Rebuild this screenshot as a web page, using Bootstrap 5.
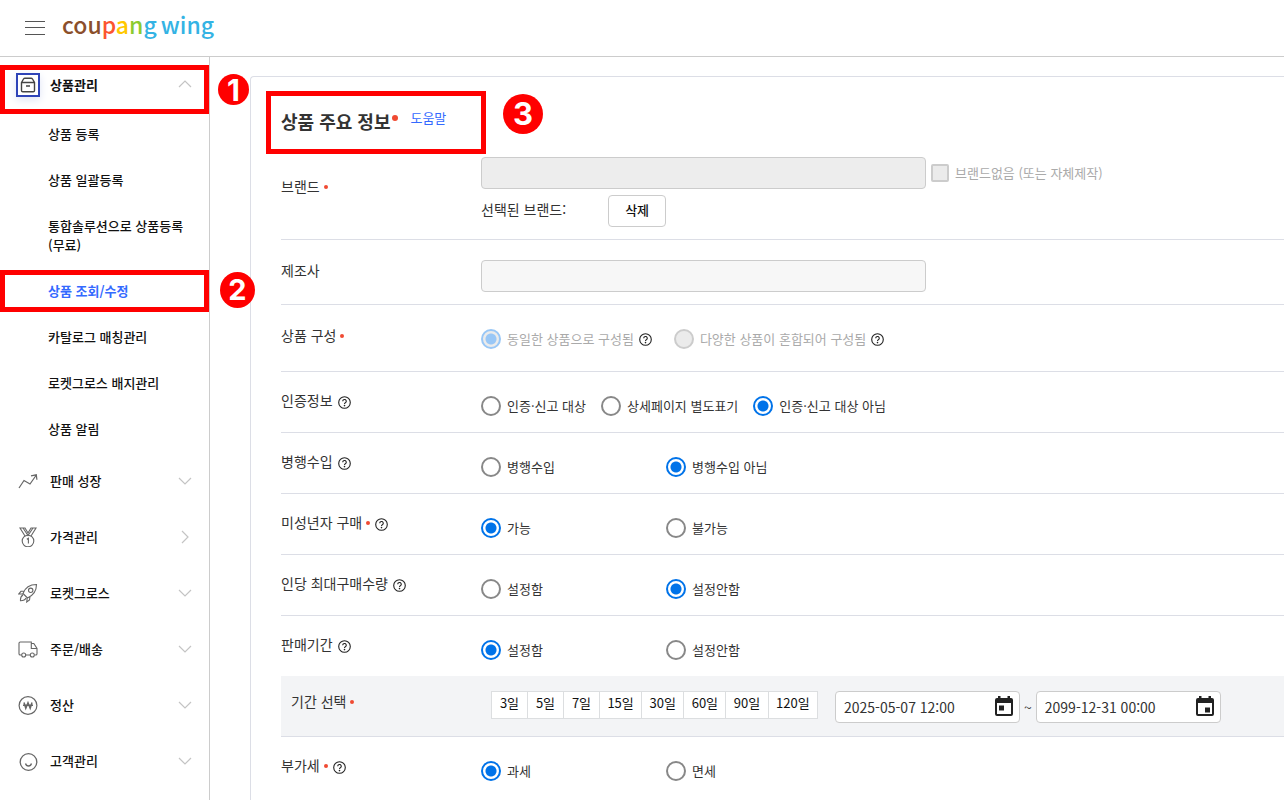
<!DOCTYPE html>
<html lang="ko">
<head>
<meta charset="utf-8">
<meta name="viewport" content="width=device-width, initial-scale=1">
<title>coupang wing</title>
<link href="https://cdn.jsdelivr.net/npm/bootstrap@5.3.0/dist/css/bootstrap.min.css" rel="stylesheet">
<style>
body{font-family:"Noto Sans CJK KR",sans-serif;font-size:14px;line-height:20px;color:#333;background:#fff;overflow-x:hidden}
.topbar{height:57px;border-bottom:1px solid #ccc;padding:0 0 4px 25px}
.brand-logo{font-size:23px;font-weight:500;line-height:32px;margin-left:17px;padding-bottom:4px;color:#34b3e4;display:flex;gap:4px}
.c-brown{color:#8b4f2b}.c-red{color:#fb5530}.c-yellow{color:#ffc800}.c-green{color:#8ccb2e}
.shell{min-height:calc(100vh - 57px)}
.side{width:210px;border-right:1px solid #ccc}
.side a{color:#111;text-decoration:none;font-size:13px;font-weight:500}
.side-top{height:56px;padding:0 17px 0 18px}
.side-top.open{height:55px;font-weight:700!important}
.side-top .glyph{width:20px;height:20px;margin-right:12px;color:#666}
.side-top.open .pic{border:2px solid #2f44b8;width:24px;height:24px;margin:0 10px 0 -2px;box-shadow:0 3px 8px #dfe4f5}
.side-top.open .glyph{margin:0;color:#444}
.side-top .chev{width:14px;height:14px;color:#c4c4c4}
.side-sub a{display:block;padding:12px 16px 15px 48px;line-height:19px}
.side-sub a.current{color:#346aff;font-weight:700}
.frame{position:absolute;border:5px solid #f00;pointer-events:none}
.step{position:absolute;border-radius:50%;background:#f00;color:#fff;font-family:Inter,"Liberation Sans",sans-serif;font-weight:700;display:flex;align-items:center;justify-content:center}
.frame-a{left:0;right:0;top:8px;height:49px}
.frame-b{left:0;right:0;top:1px;height:42px}
.step-a{left:218px;top:17px;width:31px;height:31px;font-size:30px}
.step-b{left:220px;top:3px;width:35px;height:36px;font-size:29px}
.frame-c{left:-15px;top:-1px;width:220px;height:63px}
.step-c{left:222px;top:2px;width:40px;height:40px;font-size:31px}
.main-area{padding:19px 0 0 40px}
.panel{border:1px solid #dcdee6;border-right:0;border-bottom:0;border-top-left-radius:4px;padding:15px 0 0 30px;min-height:100%}
.panel-head{height:65px;padding-top:15px}
.panel-head h1{font-size:18px;line-height:28px;font-weight:700;margin:0}
.panel-head a{font-size:13px;line-height:22px;color:#346aff;text-decoration:none;margin-left:12px}
.req{display:inline-block;width:4px;height:4px;border-radius:50%;background:#f04a32;vertical-align:3px;margin-left:4px}
.panel-head .req{width:6px;height:6px;margin:8px 0 0 2px}
.q{width:13px;height:13px;color:#222;vertical-align:-3px;margin-left:5px}
.frow{border-bottom:1px solid #dcdee6;min-height:61px}
.frow:last-child{border-bottom:0}
.fname{width:200px;flex:none;padding-top:18px}
.fctl{padding-top:24px}
.r-brand{min-height:83px}.r-brand .fname{padding-top:19px}.r-brand .fctl{padding-top:0}
.r-maker{min-height:65px}.r-maker .fname,.r-comp .fname{padding-top:20px}.r-maker .fctl{padding-top:20px}
.r-comp{min-height:67px}
.fctl .wide{width:445px;height:32px;border:1px solid #ccc;border-radius:4px;background:#f7f7f7;min-height:0}
.r-brand .wide{background:#ededed}
.opt{display:flex;align-items:center;font-size:13px}
.opt label{padding-left:6px}
.opt .form-check-input{width:20px;height:20px;margin:0;border:2px solid #888;background:#fff;opacity:1;flex:none}
.opt .form-check-input[type=radio]:checked{border-color:#0073e9;background:radial-gradient(circle,#0073e9 5px,#fff 6px)}
.opt .form-check-input:disabled{border-color:#ccc;background-color:#ebebeb}
.opt .form-check-input[type=radio]:disabled:checked{border-color:#99c7f6;background:radial-gradient(circle,#99c7f6 5px,#ebebeb 6px)}
.opt .form-check-input[type=checkbox]{width:18px;height:18px;border-radius:2px}
.opt .form-check-input:disabled~label{color:#aaa;opacity:1}
.half{width:185px}
.no-brand{margin-left:5px}
.picked{margin-top:6px;gap:42px}
.gap-wide{gap:22px}
.gap-mid{gap:15px}
.btn-del{height:32px;width:58px;border:1px solid #ccc;border-radius:4px;font-size:13px;font-weight:500;line-height:20px;padding:0 0 2px;color:#111;background:#fff}
.frow.before-sub{border-bottom:0;min-height:60px}
.frow.period{background:#f3f4f6;padding-left:10px}
.frow.period .fname{padding-top:15px}
.frow.period .fctl{padding-top:15px}
.days{width:327px;margin-right:17px}
.days .btn{height:28px;border:1px solid #dcdee0;border-radius:0;background:#fff;font-size:13px;line-height:20px;padding:0 7px 4px;min-width:37px;color:#111}
.when{width:185px;height:32px;border:1px solid #ccc;border-radius:4px;background:#fff;padding:0 5px 0 8px}
.when input{border:0;padding:0;font-size:14px;color:#333;width:100%;min-width:0;outline:0;background:none}
.when button{border:0;background:none;padding:0;line-height:0}
.when svg{width:20px;height:24px;margin-bottom:2px}
</style>
</head>
<body>
<svg class="d-none" aria-hidden="true">
 <symbol id="q" viewBox="0 0 13 13"><circle cx="6.500" cy="6.500" r="5.800" fill="none" stroke="currentColor" stroke-width="1.100"/><path d="M4.700 5.300a1.800 1.700 0 1 1 2.700 1.400c-.7.400-.9.600-.9 1.200" fill="none" stroke="currentColor" stroke-width="1.100"/><circle cx="6.500" cy="9.600" r=".8" fill="currentColor"/></symbol>
 <symbol id="down" viewBox="0 0 14 14"><path d="M1 4l6 6 6-6" fill="none" stroke="currentColor" stroke-width="1.200"/></symbol>
 <symbol id="up" viewBox="0 0 14 14"><path d="M1 9l6-6 6 6" fill="none" stroke="currentColor" stroke-width="1.200"/></symbol>
 <symbol id="right" viewBox="0 0 14 14"><path d="M4 1l6 6-6 6" fill="none" stroke="currentColor" stroke-width="1.200"/></symbol>
</svg>

<header class="topbar d-flex align-items-center">
 <button class="btn p-0 border-0 lh-1" aria-label="메뉴"><svg width="20" height="14" viewBox="0 0 20 14" stroke="#555" stroke-width="1"><path d="M0 .5h20M0 6.500h20M0 13.500h20"/></svg></button>
 <a href="#" class="brand-logo text-decoration-none"><span><span class="c-brown">cou</span><span class="c-red">p</span><span class="c-yellow">a</span><span class="c-green">n</span>g</span><span>wing</span></a>
</header>

<div class="shell d-flex">
 <nav class="side flex-shrink-0">
  <ul class="list-unstyled m-0">
   <li class="position-relative">
    <a href="#" class="side-top open d-flex align-items-center"><span class="pic"><svg class="glyph d-block" viewBox="0 0 20 20" fill="none" stroke="currentColor" stroke-width="1.400"><path d="M3.500 7.500L5.500 4q.5-.8 1.500-.8h6q1 0 1.500.8l2 3.500v8q0 1.300-1.300 1.300H4.800q-1.300 0-1.300-1.300zM3.500 7.500h13M8 11h4"/></svg></span><span class="flex-grow-1">상품관리</span><svg class="chev"><use href="#up"/></svg></a>
    <span class="frame frame-a"></span><span class="step step-a">1</span>
   </li>
   <li><ul class="side-sub list-unstyled m-0">
    <li><a href="#">상품 등록</a></li>
    <li><a href="#">상품 일괄등록</a></li>
    <li><a href="#">통합솔루션으로 상품등록<br>(무료)</a></li>
    <li class="position-relative"><a href="#" class="current" aria-current="page">상품 조회/수정</a><span class="frame frame-b"></span><span class="step step-b">2</span></li>
    <li><a href="#">카탈로그 매칭관리</a></li>
    <li><a href="#">로켓그로스 배지관리</a></li>
    <li><a href="#">상품 알림</a></li>
   </ul></li>
   <li><a href="#" class="side-top d-flex align-items-center"><svg class="glyph" viewBox="0 0 20 20" fill="none" stroke="currentColor" stroke-width="1.200"><path d="M1 17l5-7.500 6 3.500 6-8.500M13 4.800l5.300-1 .6 5"/></svg><span class="flex-grow-1">판매 성장</span><svg class="chev"><use href="#down"/></svg></a></li>
   <li><a href="#" class="side-top d-flex align-items-center"><svg class="glyph" viewBox="0 0 20 20" fill="none" stroke="currentColor" stroke-width="1.100"><circle cx="10" cy="14" r="5.800"/><path d="M7 9L2 1h5l3 5 3-5h5l-5 8M5 1l5 7.500L15 1M8.800 12.200l1.600-1v5.300"/></svg><span class="flex-grow-1">가격관리</span><svg class="chev"><use href="#right"/></svg></a></li>
   <li><a href="#" class="side-top d-flex align-items-center"><svg class="glyph" viewBox="0 0 20 20" fill="none" stroke="currentColor" stroke-width="1.100"><path d="M5 10.500C7 5 12 1.500 18.500 1.500 18.500 8 15 12.500 9.500 15zM6.500 8L3 8.300.8 11l4.200-.2M12 13.500l-.5 3.500-2.800 2 .5-4M5 12c-2 1-2.700 3-2.500 5.700 2.800 0 4.800-.8 5.500-2.700"/><circle cx="12.700" cy="7.300" r="2.200"/></svg><span class="flex-grow-1">로켓그로스</span><svg class="chev"><use href="#down"/></svg></a></li>
   <li><a href="#" class="side-top d-flex align-items-center"><svg class="glyph" viewBox="0 0 20 20" fill="none" stroke="currentColor" stroke-width="1.100"><path d="M3.500 16H2.300Q1 16 1 14.700V4.300Q1 3 2.300 3h11v6.500H19M13.300 4.500h2.500L19 9.500v5.200q0 1.300-1.300 1.300h-1M8 16h4"/><circle cx="5.700" cy="16" r="2"/><circle cx="14.300" cy="16" r="2"/></svg><span class="flex-grow-1">주문/배송</span><svg class="chev"><use href="#down"/></svg></a></li>
   <li><a href="#" class="side-top d-flex align-items-center"><svg class="glyph" viewBox="0 0 20 20" fill="none" stroke="currentColor" stroke-width="1.200"><circle cx="10" cy="10.500" r="8.900"/><path stroke-width="1.500" d="M6 7.500l1.800 5.700L10 7.700l2.200 5.500L14 7.500M5 10.200h10"/></svg><span class="flex-grow-1">정산</span><svg class="chev"><use href="#down"/></svg></a></li>
   <li><a href="#" class="side-top d-flex align-items-center"><svg class="glyph" viewBox="0 0 20 20" fill="none" stroke="currentColor" stroke-width="1.300"><circle cx="10.500" cy="11" r="8.300"/><path d="M7.500 12.500q.7 2.500 3 2.500t3-2.500"/></svg><span class="flex-grow-1">고객관리</span><svg class="chev"><use href="#down"/></svg></a></li>
  </ul>
 </nav>

 <main class="main-area flex-grow-1">
  <form class="panel">
   <div class="panel-head d-flex align-items-start position-relative">
    <h1>상품 주요 정보</h1><span class="req"></span><a href="#">도움말</a>
    <span class="frame frame-c"></span><span class="step step-c">3</span>
   </div>

   <div class="frow r-brand d-flex">
    <label class="fname" for="brand">브랜드<span class="req"></span></label>
    <div class="fctl">
     <div class="d-flex align-items-center">
      <input id="brand" class="form-control wide" disabled>
      <div class="opt no-brand"><input class="form-check-input" type="checkbox" id="nobrand" disabled><label for="nobrand">브랜드없음 (또는 자체제작)</label></div>
     </div>
     <div class="d-flex align-items-center picked"><span class="pb-1">선택된 브랜드:</span><button type="button" class="btn btn-del">삭제</button></div>
    </div>
   </div>

   <div class="frow r-maker d-flex">
    <label class="fname" for="maker">제조사</label>
    <div class="fctl"><input id="maker" class="form-control wide" disabled></div>
   </div>

   <div class="frow r-comp d-flex">
    <div class="fname">상품 구성<span class="req"></span></div>
    <div class="fctl d-flex align-items-start gap-wide">
     <div class="opt"><input class="form-check-input" type="radio" name="comp" id="c1" checked disabled><label for="c1">동일한 상품으로 구성됨</label><svg class="q"><use href="#q"/></svg></div>
     <div class="opt"><input class="form-check-input" type="radio" name="comp" id="c2" disabled><label for="c2">다양한 상품이 혼합되어 구성됨</label><svg class="q"><use href="#q"/></svg></div>
    </div>
   </div>

   <div class="frow d-flex">
    <div class="fname">인증정보<svg class="q"><use href="#q"/></svg></div>
    <div class="fctl d-flex align-items-start gap-mid">
     <div class="opt"><input class="form-check-input" type="radio" name="cert" id="e1"><label for="e1">인증·신고 대상</label></div>
     <div class="opt"><input class="form-check-input" type="radio" name="cert" id="e2"><label for="e2">상세페이지 별도표기</label></div>
     <div class="opt"><input class="form-check-input" type="radio" name="cert" id="e3" checked><label for="e3">인증·신고 대상 아님</label></div>
    </div>
   </div>

   <div class="frow d-flex">
    <div class="fname">병행수입<svg class="q"><use href="#q"/></svg></div>
    <div class="fctl d-flex align-items-start">
     <div class="opt half"><input class="form-check-input" type="radio" name="imp" id="i1"><label for="i1">병행수입</label></div>
     <div class="opt"><input class="form-check-input" type="radio" name="imp" id="i2" checked><label for="i2">병행수입 아님</label></div>
    </div>
   </div>

   <div class="frow d-flex">
    <div class="fname">미성년자 구매<span class="req"></span><svg class="q"><use href="#q"/></svg></div>
    <div class="fctl d-flex align-items-start">
     <div class="opt half"><input class="form-check-input" type="radio" name="minor" id="m1" checked><label for="m1">가능</label></div>
     <div class="opt"><input class="form-check-input" type="radio" name="minor" id="m2"><label for="m2">불가능</label></div>
    </div>
   </div>

   <div class="frow d-flex">
    <div class="fname">인당 최대구매수량<svg class="q"><use href="#q"/></svg></div>
    <div class="fctl d-flex align-items-start">
     <div class="opt half"><input class="form-check-input" type="radio" name="max" id="x1"><label for="x1">설정함</label></div>
     <div class="opt"><input class="form-check-input" type="radio" name="max" id="x2" checked><label for="x2">설정안함</label></div>
    </div>
   </div>

   <div class="frow before-sub d-flex">
    <div class="fname">판매기간<svg class="q"><use href="#q"/></svg></div>
    <div class="fctl d-flex align-items-start">
     <div class="opt half"><input class="form-check-input" type="radio" name="term" id="t1" checked><label for="t1">설정함</label></div>
     <div class="opt"><input class="form-check-input" type="radio" name="term" id="t2"><label for="t2">설정안함</label></div>
    </div>
   </div>

   <div class="frow period d-flex">
    <div class="fname">기간 선택<span class="req"></span></div>
    <div class="fctl d-flex align-items-start">
     <div class="btn-group days" role="group" aria-label="기간">
      <button type="button" class="btn">3일</button><button type="button" class="btn">5일</button><button type="button" class="btn">7일</button><button type="button" class="btn">15일</button><button type="button" class="btn">30일</button><button type="button" class="btn">60일</button><button type="button" class="btn">90일</button><button type="button" class="btn">120일</button>
     </div>
     <div class="d-flex align-items-center">
      <div class="when d-flex align-items-center"><input type="text" value="2025-05-07 12:00" aria-label="시작일"><button type="button" aria-label="달력"><svg viewBox="0 0 20 24" fill="#222"><path fill-rule="evenodd" d="M4 2h2.500v2h7V2H16v2h1q2 0 2 2v14q0 2-2 2H3q-2 0-2-2V6q0-2 2-2h1zM3 9v11h14V9zm2 2.500h5v5H5z"/></svg></button></div>
      <span class="px-1">~</span>
      <div class="when d-flex align-items-center"><input type="text" value="2099-12-31 00:00" aria-label="종료일"><button type="button" aria-label="달력"><svg viewBox="0 0 20 24" fill="#222"><path fill-rule="evenodd" d="M4 2h2.500v2h7V2H16v2h1q2 0 2 2v14q0 2-2 2H3q-2 0-2-2V6q0-2 2-2h1zM3 9v11h14V9zm7 4.500h5v5h-5z"/></svg></button></div>
     </div>
    </div>
   </div>

   <div class="frow d-flex">
    <div class="fname">부가세<span class="req"></span><svg class="q"><use href="#q"/></svg></div>
    <div class="fctl d-flex align-items-start">
     <div class="opt half"><input class="form-check-input" type="radio" name="vat" id="v1" checked><label for="v1">과세</label></div>
     <div class="opt"><input class="form-check-input" type="radio" name="vat" id="v2"><label for="v2">면세</label></div>
    </div>
   </div>
  </form>
 </main>
</div>
<script src="https://cdn.jsdelivr.net/npm/bootstrap@5.3.0/dist/js/bootstrap.bundle.min.js"></script>
</body>
</html>
